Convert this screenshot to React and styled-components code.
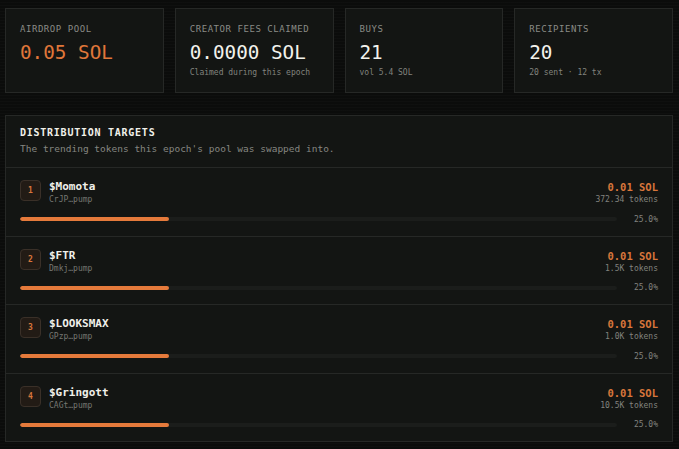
import React from 'react';
import styled, { createGlobalStyle } from 'styled-components';

const MONO = '"DejaVu Sans Mono", "Liberation Mono", monospace';

const stats = [
  { label: 'AIRDROP POOL', value: '0.05 SOL', accent: true },
  { label: 'CREATOR FEES CLAIMED', value: '0.0000 SOL', note: 'Claimed during this epoch' },
  { label: 'BUYS', value: '21', note: 'vol 5.4 SOL' },
  { label: 'RECIPIENTS', value: '20', note: '20 sent · 12 tx' },
];

const targets = [
  { name: '$Momota', mint: 'CrJP…pump', sol: '0.01 SOL', tokens: '372.34 tokens', share: 25 },
  { name: '$FTR', mint: 'Dmkj…pump', sol: '0.01 SOL', tokens: '1.5K tokens', share: 25 },
  { name: '$LOOKSMAX', mint: 'GPzp…pump', sol: '0.01 SOL', tokens: '1.0K tokens', share: 25 },
  { name: '$Gringott', mint: 'CAGt…pump', sol: '0.01 SOL', tokens: '10.5K tokens', share: 25 },
];

// COMPONENT

const App = () => (
  <>
    <GlobalStyle />
    <Page>
      <StatGrid>
        {stats.map((s) => (
          <StatCard key={s.label}>
            <StatLabel>{s.label}</StatLabel>
            <StatValue $accent={s.accent}>{s.value}</StatValue>
            {s.note && <StatNote>{s.note}</StatNote>}
          </StatCard>
        ))}
      </StatGrid>

      <Panel>
        <PanelHeader>
          <PanelTitle>DISTRIBUTION TARGETS</PanelTitle>
          <PanelSub>The trending tokens this epoch's pool was swapped into.</PanelSub>
        </PanelHeader>

        {targets.map((t, i) => (
          <TargetRow key={t.name}>
            <TargetTop>
              <Rank>{i + 1}</Rank>
              <TokenInfo>
                <TokenName>{t.name}</TokenName>
                <TokenMint>{t.mint}</TokenMint>
              </TokenInfo>
              <Amounts>
                <SolAmount>{t.sol}</SolAmount>
                <TokenAmount>{t.tokens}</TokenAmount>
              </Amounts>
            </TargetTop>
            <BarLine>
              <Track>
                <Fill style={{ width: `${t.share}%` }} />
              </Track>
              <Percent>{t.share.toFixed(1)}%</Percent>
            </BarLine>
          </TargetRow>
        ))}
      </Panel>
    </Page>
  </>
);

// STYLES

const GlobalStyle = createGlobalStyle`
  html, body {
    margin: 0;
    background-color: #0b0c0b;
    background-image: repeating-linear-gradient(
      0deg,
      rgba(255, 255, 255, 0.016) 0 1px,
      transparent 1px 3px
    );
  }
  * { box-sizing: border-box; }
`;

const Page = styled.div`
  padding: 8px 6px 8px 5px;
  font-family: ${MONO};
  color: #eeeee8;
`;

const StatGrid = styled.div`
  display: grid;
  grid-template-columns: repeat(4, 1fr);
  gap: 11px;
`;

const StatCard = styled.div`
  display: flex;
  flex-direction: column;
  padding: 14px 14px 11px;
  height: 85px;
  background: #131513;
  border: 1px solid #262826;
`;

const StatLabel = styled.div`
  font-size: 9px;
  line-height: 12px;
  letter-spacing: 0.55px;
  color: #8a8b86;
`;

const StatValue = styled.div`
  margin-top: 6px;
  font-size: 19.3px;
  line-height: 24px;
  color: ${(p) => (p.$accent ? '#e0773a' : '#f2f2ec')};
`;

const StatNote = styled.div`
  margin-top: 2px;
  font-size: 8px;
  line-height: 12px;
  color: #82837e;
`;

const Panel = styled.div`
  margin-top: 22px;
  background: #131513;
  border: 1px solid #262826;
`;

const PanelHeader = styled.div`
  padding: 10px 14px 11px;
  border-bottom: 1px solid #262826;
`;

const PanelTitle = styled.div`
  font-size: 10px;
  line-height: 14px;
  font-weight: bold;
  letter-spacing: 0.75px;
  color: #f0f0ea;
`;

const PanelSub = styled.div`
  margin-top: 2px;
  font-size: 9.5px;
  line-height: 14px;
  color: #858681;
`;

const TargetRow = styled.div`
  padding: 12px 14px 11.5px;
  border-bottom: 1px solid #262826;

  &:last-child {
    border-bottom: none;
  }
`;

const TargetTop = styled.div`
  display: flex;
  align-items: flex-start;
`;

const Rank = styled.div`
  width: 21px;
  height: 21px;
  display: flex;
  align-items: center;
  justify-content: center;
  border: 1px solid #3a3028;
  border-radius: 4px;
  background: #221b15;
  color: #d8763b;
  font-size: 8px;
  font-weight: bold;
`;

const TokenInfo = styled.div`
  margin-left: 8px;
  flex: 1;
`;

const TokenName = styled.div`
  font-size: 11px;
  line-height: 14px;
  font-weight: bold;
  color: #f0f0ea;
`;

const TokenMint = styled.div`
  font-size: 8px;
  line-height: 12px;
  color: #767772;
`;

const Amounts = styled.div`
  text-align: right;
`;

const SolAmount = styled.div`
  font-size: 10.5px;
  line-height: 14px;
  font-weight: bold;
  color: #d8763b;
`;

const TokenAmount = styled.div`
  font-size: 8px;
  line-height: 12px;
  color: #82837e;
`;

const BarLine = styled.div`
  display: grid;
  grid-template-columns: 1fr 41px;
  align-items: center;
  height: 10px;
  margin-top: 8px;
`;

const Track = styled.div`
  height: 4px;
  border-radius: 2px;
  background: #1b1d1b;
  overflow: hidden;
`;

const Fill = styled.div`
  height: 100%;
  border-radius: 2px;
  background: #e57a3b;
`;

const Percent = styled.div`
  text-align: right;
  font-size: 8px;
  color: #82837e;
`;

// EXPORT

export default App;
